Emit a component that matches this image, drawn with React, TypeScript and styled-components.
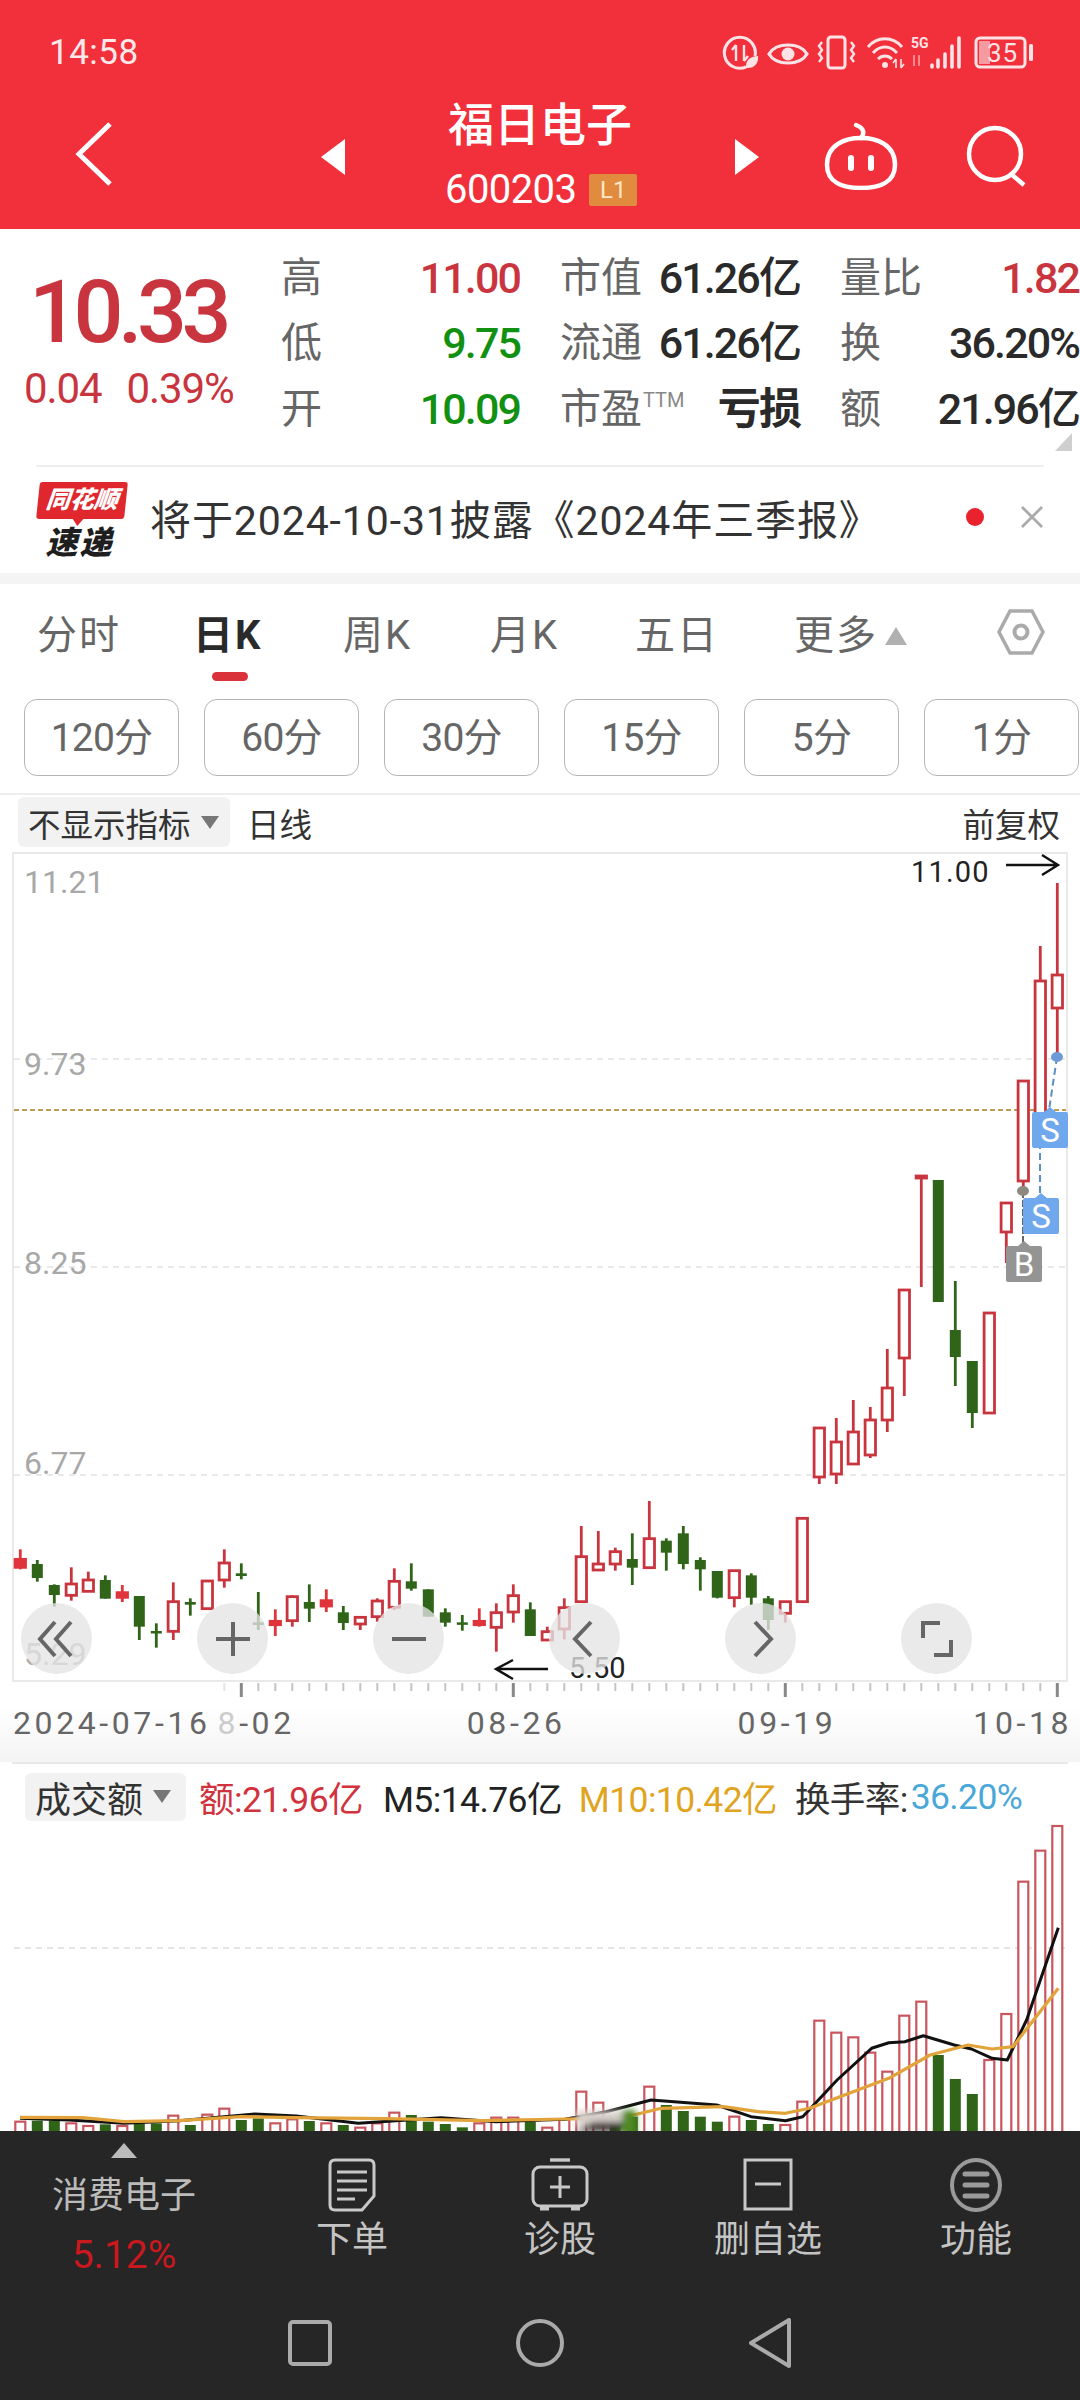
import React from 'react';
import styled, { createGlobalStyle } from 'styled-components';

const FONT = 'Roboto, "Noto Sans CJK SC", sans-serif';
const RED = '#c9353f';
const GREEN = '#2f6419';

const GlobalStyle = createGlobalStyle`
  html, body {
    margin: 0;
    padding: 0;
    background: #fff;
    font-family: ${FONT};
  }
  * { box-sizing: border-box; }
`;

const Page = styled.div`
  position: relative;
  width: 1080px;
  height: 2400px;
  overflow: hidden;
  background: #fff;
`;

/* ---------- red header ---------- */
const Header = styled.header`
  height: 229px;
  background: #f2303c;
  color: #fff;
`;
const StatusBar = styled.div`
  height: 88px;
  padding: 16px 44px 0 49px;
  display: flex;
  align-items: center;
  justify-content: space-between;
`;
const Clock = styled.span`
  font-size: 35px;
  color: #fde8ea;
  letter-spacing: 0.5px;
`;
const NavBar = styled.div`
  height: 141px;
  display: flex;
  align-items: flex-start;
`;
const NavIcon = styled.div<{ $ml: number; $top: number }>`
  margin-left: ${(p) => p.$ml}px;
  margin-top: ${(p) => p.$top}px;
  display: flex;
  flex: none;
`;
const NavCenter = styled.div`
  flex: none;
  width: 190px;
  margin-left: 100px;
  padding-top: 11px;
  display: flex;
  flex-direction: column;
  align-items: flex-start;
`;
const StockName = styled.div`
  font-size: 46px;
  line-height: 52px;
  font-weight: 500;
  width: 190px;
  text-align: center;
`;
const StockCode = styled.div`
  margin-top: 20px;
  display: flex;
  align-items: center;
  gap: 13px;
  font-size: 40px;
  line-height: 38px;
  letter-spacing: -0.6px;
`;
const LevelTag = styled.span`
  width: 48px;
  height: 32px;
  background: #e08b3e;
  color: #fde7c8;
  font-size: 24px;
  line-height: 32px;
  text-align: center;
  border-radius: 2px;
  letter-spacing: 0;
`;

/* ---------- quote ---------- */
const Quote = styled.section`
  position: relative;
  height: 236px;
  display: flex;
`;
const PricePane = styled.div`
  width: 281px;
  padding: 36px 0 0 24px;
  color: ${RED};
`;
const BigPrice = styled.div`
  font-size: 88px;
  line-height: 94px;
  font-weight: 500;
  letter-spacing: -5.5px;
  margin-left: 5px;
`;
const PriceDelta = styled.div`
  margin-top: 8px;
  display: flex;
  gap: 25px;
  font-size: 42px;
  line-height: 44px;
  letter-spacing: -1.1px;
`;
const StatsGrid = styled.div`
  padding-top: 16px;
  display: grid;
  grid-template-columns: 239px 240px 239px;
  column-gap: 40px;
  grid-auto-rows: 65.5px;
  align-items: center;
`;
const StatCell = styled.div`
  display: flex;
  align-items: center;
  justify-content: space-between;
`;
const StatLabel = styled.span`
  font-size: 41px;
  line-height: 48px;
  color: #666;
  display: inline-flex;
  align-items: flex-start;
`;
const Ttm = styled.sup`
  font-size: 20px;
  line-height: 30px;
  color: #888;
  margin-left: 1px;
  vertical-align: baseline;
`;
const StatValue = styled.span<{ $tone?: 'up' | 'down'; $bold?: boolean }>`
  font-size: 43px;
  line-height: 48px;
  font-weight: ${(p) => (p.$bold ? 700 : 500)};
  letter-spacing: -1.9px;
  color: ${(p) => (p.$tone === 'up' ? RED : p.$tone === 'down' ? '#119011' : '#2a2a2a')};
`;
const CornerMark = styled.i`
  position: absolute;
  right: 8px;
  bottom: 14px;
  width: 0;
  height: 0;
  border-left: 17px solid transparent;
  border-bottom: 18px solid #cfcfcf;
`;

/* ---------- notice ---------- */
const Notice = styled.section`
  margin: 0 36px;
  height: 108px;
  border-top: 2px solid #eee;
  display: flex;
  align-items: center;
  padding-bottom: 6px;
`;
const Badge = styled.div`
  position: relative;
  width: 88px;
  margin-left: 2px;
  margin-top: 8px;
  text-align: center;
`;
const BadgeTop = styled.div`
  position: relative;
  height: 37px;
  background: #e0272e;
  color: #fff;
  font-size: 24px;
  line-height: 37px;
  font-weight: 900;
  font-style: italic;
  white-space: nowrap;
  transform: skewX(-6deg);
  border-radius: 3px;
  &::after {
    content: '';
    position: absolute;
    left: 36px;
    bottom: -7px;
    border-left: 6px solid transparent;
    border-right: 6px solid transparent;
    border-top: 8px solid #e0272e;
  }
`;
const BadgeBottom = styled.div`
  margin-top: 7px;
  font-size: 32px;
  line-height: 34px;
  font-weight: 900;
  font-style: italic;
  color: #1e1e1e;
  letter-spacing: 2px;
  margin-left: -5px;
`;
const NoticeText = styled.div`
  margin-left: 24px;
  font-size: 41px;
  color: #333;
  letter-spacing: 0.9px;
  white-space: nowrap;
  flex: 1;
`;
const NoticeDot = styled.i`
  width: 18px;
  height: 18px;
  border-radius: 50%;
  background: #e8232d;
  margin-right: 36px;
`;

const Band = styled.div`
  height: 11px;
  background: #f4f4f4;
`;

/* ---------- tabs ---------- */
const Tabs = styled.nav`
  height: 115px;
`;
const TabRow = styled.div`
  display: flex;
  align-items: center;
  height: 88px;
  padding: 16px 0 0 37px;
`;
const Tab = styled.div<{ $w: number; $active?: boolean }>`
  width: ${(p) => p.$w}px;
  flex: none;
  font-size: 40px;
  line-height: 72px;
  letter-spacing: 2px;
  color: ${(p) => (p.$active ? '#2a2a2a' : '#666')};
  font-weight: ${(p) => (p.$active ? 700 : 400)};
  display: flex;
  align-items: center;
  white-space: nowrap;
`;
const MoreCaret = styled.i`
  margin-left: 7px;
  width: 0;
  height: 0;
  border-left: 11px solid transparent;
  border-right: 11px solid transparent;
  border-bottom: 18px solid #b0b0b0;
`;
const HexIcon = styled.svg`
  margin-top: -8px;
`;
const TabMark = styled.i`
  display: block;
  margin-left: 212px;
  width: 36px;
  height: 9px;
  border-radius: 5px;
  background: #d9323a;
`;
const Periods = styled.div`
  display: flex;
  gap: 25px;
  padding-left: 24px;
  height: 96px;
  border-bottom: 2px solid #eee;
`;
const Period = styled.div`
  width: 155px;
  height: 77px;
  flex: none;
  border: 1px solid #b5b5b5;
  border-radius: 13px;
  font-size: 39px;
  line-height: 77px;
  text-align: center;
  color: #666;
  letter-spacing: -0.8px;
`;

/* ---------- chart toolbar ---------- */
const ChartBar = styled.div`
  height: 57px;
  padding: 0 20px 3px 18px;
  display: flex;
  align-items: center;
`;
const Selector = styled.div<{ $w: number; $h: number }>`
  width: ${(p) => p.$w}px;
  height: ${(p) => p.$h}px;
  background: #f2f2f2;
  border-radius: 6px;
  padding-left: 10px;
  display: flex;
  align-items: center;
  color: #333;
  flex: none;
`;
const SelectorText = styled.span<{ $size: number }>`
  font-size: ${(p) => p.$size}px;
  white-space: nowrap;
`;
const SelectorCaret = styled.i`
  margin-left: 10px;
  border-left: 9px solid transparent;
  border-right: 9px solid transparent;
  border-top: 13px solid #777;
`;
const BarLabel = styled.span<{ $push?: boolean }>`
  font-size: 32.5px;
  color: #333;
  margin-left: ${(p) => (p.$push ? 'auto' : '17px')};
`;

/* ---------- main chart ---------- */
const ChartArea = styled.div`
  position: relative;
  height: 829px;
`;
const ChartSvg = styled.svg`
  display: block;
  overflow: visible;
`;
const FloatRow = styled.div`
  position: absolute;
  left: 21px;
  top: 751px;
  display: flex;
  gap: 105px;
`;
const FloatButton = styled.div`
  width: 71px;
  height: 71px;
  border-radius: 50%;
  background: rgba(228, 228, 228, 0.78);
  display: flex;
  align-items: center;
  justify-content: center;
`;

const AxisStrip = styled.div`
  height: 81px;
  background: linear-gradient(#fff 30%, #f4f4f4 100%);
`;
const TickSvg = styled.svg`
  display: block;
`;
const DateRow = styled.div`
  display: flex;
  padding-left: 13px;
  margin-top: 5px;
`;
const DateLabel = styled.span<{ $ml?: number }>`
  margin-left: ${(p) => p.$ml ?? 0}px;
  font-size: 32px;
  line-height: 38px;
  letter-spacing: 3.6px;
  color: #666;
  white-space: nowrap;
  b {
    font-weight: 400;
    color: #ccc;
  }
`;

/* ---------- volume ---------- */
const VolumePanel = styled.section`
  height: 369px;
  position: relative;
  border-top: 2px solid #e8e8e8;
  margin: 0 12px;
`;
const VolumeHead = styled.div`
  position: absolute;
  left: 13px;
  top: 7px;
  z-index: 1;
  display: flex;
  align-items: center;
`;
const Legend = styled.span<{ $color: string; $ml: number }>`
  margin-left: ${(p) => p.$ml}px;
  font-size: 35.5px;
  letter-spacing: -0.6px;
  color: ${(p) => p.$color};
  white-space: nowrap;
`;
const VolumeSvg = styled.svg`
  position: absolute;
  left: -12px;
  top: -2px;
`;

/* ---------- dock ---------- */
const Dock = styled.footer`
  height: 269px;
  background: #262626;
`;
const DockTop = styled.div`
  height: 152px;
  display: flex;
`;
const Sector = styled.div`
  width: 248px;
  padding-top: 12px;
  display: flex;
  flex-direction: column;
  align-items: center;
  flex: none;
`;
const SectorCaret = styled.i`
  border-left: 13px solid transparent;
  border-right: 13px solid transparent;
  border-bottom: 15px solid #bbb;
`;
const SectorName = styled.div`
  margin-top: 16px;
  font-size: 36px;
  line-height: 44px;
  color: #bbb;
`;
const SectorRate = styled.div`
  margin-top: 17px;
  font-size: 39px;
  line-height: 40px;
  color: #c9181e;
`;
const DockItem = styled.div`
  width: 208px;
  flex: none;
  padding-top: 27px;
  display: flex;
  flex-direction: column;
  align-items: center;
`;
const DockLabel = styled.div`
  margin-top: 5px;
  font-size: 36px;
  line-height: 46px;
  color: #c4c4c4;
`;
const SysNav = styled.div`
  height: 117px;
  display: flex;
  justify-content: center;
  align-items: flex-start;
  padding-top: 35px;
`;
const SysSlot = styled.div`
  width: 230px;
  height: 50px;
  display: flex;
  justify-content: center;
  align-items: center;
`;

/* ---------- data ---------- */
type Kind = 'r' | 'g' | 'f';
// high, low, body top, body bottom
type Candle = [number, number, number, number, Kind];

const candleX = (i: number) => 20.3 + 17 * i;
const lowY = (v: number) => 1450 + v / 3;

const earlyCandles: Candle[] = [
  [298, 358, 328, 352, 'f'], [330, 395, 342, 384, 'g'], [403, 470, 405, 435, 'g'],
  [352, 452, 402, 436, 'r'], [365, 425, 390, 424, 'r'], [376, 446, 390, 446, 'g'],
  [405, 456, 428, 442, 'f'], [438, 570, 438, 530, 'g'], [520, 593, 543, 549, 'g'],
  [397, 570, 455, 544, 'r'], [445, 497, 456, 464, 'g'], [392, 478, 393, 476, 'r'],
  [298, 413, 339, 390, 'r'], [340, 388, 370, 378, 'g'], [426, 540, 517, 525, 'g'],
  [478, 558, 514, 524, 'f'], [436, 530, 440, 512, 'r'], [403, 516, 456, 476, 'g'],
  [418, 486, 452, 468, 'f'], [468, 540, 487, 519, 'g'], [498, 540, 502, 522, 'r'],
  [445, 515, 453, 500, 'r'], [355, 480, 394, 472, 'r'], [340, 422, 394, 416, 'g'],
  [418, 500, 418, 500, 'g'], [475, 530, 487, 518, 'g'], [495, 542, 517, 524, 'g'],
  [475, 530, 514, 524, 'f'], [460, 605, 488, 532, 'r'], [403, 518, 437, 486, 'r'],
  [457, 558, 478, 558, 'g'], [530, 572, 545, 570, 'r'], [445, 568, 473, 537, 'r'],
  [228, 455, 320, 455, 'r'], [243, 360, 342, 360, 'r'], [293, 362, 305, 342, 'r'],
  [250, 405, 327, 353, 'g'], [153, 355, 266, 353, 'r'], [265, 362, 272, 308, 'g'],
  [228, 358, 250, 342, 'g'], [322, 422, 330, 358, 'g'], [363, 445, 363, 443, 'g'],
  [362, 472, 362, 443, 'r'], [370, 465, 376, 443, 'g'], [438, 540, 445, 510, 'g'],
  [455, 518, 455, 490, 'r'], [205, 455, 205, 455, 'r'],
];

const lateCandles: Candle[] = [
  [1428, 1484, 1428, 1477, 'r'], [1418, 1484, 1442, 1474, 'r'], [1400, 1465, 1432, 1464, 'r'],
  [1407, 1458, 1420, 1455, 'r'], [1349, 1432, 1388, 1420, 'r'], [1290, 1396, 1290, 1358, 'r'],
  [1176, 1287, 1176, 1178, 'r'], [1180, 1302, 1180, 1302, 'g'], [1281, 1386, 1330, 1357, 'g'],
  [1361, 1428, 1361, 1413, 'g'], [1313, 1413, 1313, 1413, 'r'], [1203, 1263, 1203, 1232, 'r'],
  [1081, 1191, 1081, 1181, 'r'], [946, 1142, 981, 1122, 'r'], [883, 1058, 975, 1008, 'r'],
];

const candles: Candle[] = [
  ...earlyCandles.map(
    ([h, l, t, b, k]): Candle => [lowY(h), lowY(l), lowY(t), lowY(b), k],
  ),
  ...lateCandles,
];

const volumes: [number, 'r' | 'g'][] = [
  [1115, 'r'], [1112, 'g'], [1112, 'g'], [1120, 'r'], [1128, 'r'], [1123, 'g'], [1128, 'r'], [1120, 'g'],
  [1120, 'g'], [1097, 'r'], [1125, 'g'], [1094, 'r'], [1076, 'r'], [1110, 'g'], [1105, 'g'], [1120, 'r'],
  [1108, 'r'], [1113, 'g'], [1120, 'r'], [1125, 'g'], [1133, 'r'], [1120, 'r'], [1088, 'r'], [1095, 'g'],
  [1115, 'g'], [1122, 'g'], [1132, 'g'], [1120, 'r'], [1103, 'r'], [1103, 'r'], [1115, 'g'], [1133, 'r'],
  [1108, 'r'], [1025, 'r'], [1058, 'r'], [1100, 'g'], [1100, 'g'], [1010, 'r'], [1065, 'g'], [1083, 'g'],
  [1100, 'g'], [1115, 'g'], [1100, 'r'], [1110, 'g'], [1122, 'g'], [1125, 'r'], [1055, 'r'], [812, 'r'],
  [848, 'r'], [862, 'r'], [908, 'r'], [965, 'r'], [797, 'r'], [755, 'r'], [915, 'g'], [987, 'g'],
  [1032, 'g'], [930, 'r'], [792, 'r'], [395, 'r'], [302, 'r'], [228, 'r'],
];

const ma5: [number, number][] = [
  [29, 1105], [100, 1110], [180, 1120], [260, 1112], [370, 1092], [430, 1098], [520, 1120], [640, 1103],
  [720, 1115], [820, 1108], [880, 1085], [945, 1050], [1040, 1065], [1090, 1100], [1140, 1112], [1165, 1100],
  [1215, 990], [1265, 895], [1290, 878], [1313, 875], [1340, 857], [1385, 885], [1410, 897], [1440, 925],
  [1462, 930], [1490, 810], [1536, 533],
];
const ma10: [number, number][] = [
  [29, 1102], [120, 1103], [180, 1115], [260, 1112], [350, 1100], [430, 1103], [560, 1106], [700, 1112],
  [820, 1107], [900, 1105], [960, 1075], [1050, 1070], [1100, 1085], [1140, 1090], [1175, 1075], [1290, 985],
  [1350, 915], [1405, 885], [1440, 897], [1470, 890], [1536, 715],
];

const CHART_TOP = 852;
const VOL_TOP = 1762;

const linePoints = (pts: [number, number][]) =>
  pts.map(([x, y]) => `${(x * 0.689).toFixed(1)},${(1750 + y / 3 - VOL_TOP).toFixed(1)}`).join(' ');

/* ---------- drawings ---------- */
const CandleMark: React.FC<{ c: Candle; i: number }> = ({ c, i }) => {
  const [h, l, t, b, k] = c;
  const x = candleX(i);
  const col = k === 'g' ? GREEN : k === 'f' ? '#e0343c' : RED;
  const top = t - CHART_TOP;
  const bottom = b - CHART_TOP;
  return (
    <g>
      <line x1={x} x2={x} y1={h - CHART_TOP} y2={l - CHART_TOP} stroke={col} strokeWidth={2.8} />
      {k === 'g' ? (
        <rect x={x - 5.5} y={top} width={11} height={Math.max(bottom - top, 2.5)} fill={col} />
      ) : (
        <rect
          x={x - 5.2}
          y={top}
          width={10.4}
          height={Math.max(bottom - top, 1.5)}
          fill={k === 'f' ? col : '#fff'}
          stroke={col}
          strokeWidth={2.8}
        />
      )}
    </g>
  );
};

const AxisText: React.FC<{ y: number; children: string }> = ({ y, children }) => (
  <text x={24} y={y - CHART_TOP + 12} fontSize={32} fill="#a8a8a8" fontFamily={FONT}>
    {children}
  </text>
);

const Pin: React.FC<{ x: number; y: number; w: number; fill: string; label: string }> = ({ x, y, w, fill, label }) => (
  <g>
    <path
      d={`M${x + 2} ${y} H${x + w / 2 - 6} L${x + w / 2} ${y - 5} L${x + w / 2 + 6} ${y} H${x + w - 2} Q${x + w} ${y} ${x + w} ${y + 2} V${y + 34} Q${x + w} ${y + 36} ${x + w - 2} ${y + 36} H${x + 2} Q${x} ${y + 36} ${x} ${y + 34} V${y + 2} Q${x} ${y} ${x + 2} ${y} Z`}
      fill={fill}
    />
    <text x={x + w / 2} y={y + 30} fontSize={33} fill="#fff" textAnchor="middle" fontFamily={FONT}>
      {label}
    </text>
  </g>
);

const KLineChart: React.FC = () => {
  const gridYs = [1059, 1267, 1475];
  return (
    <ChartSvg width={1080} height={829} viewBox="0 0 1080 829">
      <rect x={13} y={1} width={1054} height={828} fill="none" stroke="#e9e9e9" strokeWidth={2} />
      {gridYs.map((g) => (
        <line key={g} x1={14} x2={1066} y1={g - CHART_TOP} y2={g - CHART_TOP} stroke="#e2e2e2" strokeWidth={1.5} strokeDasharray="6 5" />
      ))}
      <line x1={14} x2={1066} y1={1110 - CHART_TOP} y2={1110 - CHART_TOP} stroke="#c49a52" strokeWidth={2} strokeDasharray="5 3" />
      <AxisText y={881}>11.21</AxisText>
      <AxisText y={1063}>9.73</AxisText>
      <AxisText y={1262}>8.25</AxisText>
      <AxisText y={1462}>6.77</AxisText>
      <AxisText y={1653}>5.29</AxisText>

      {candles.map((c, i) => (
        <CandleMark key={i} c={c} i={i} />
      ))}

      {/* trade markers */}
      <line x1={1023} x2={1023} y1={1191 - CHART_TOP} y2={1246 - CHART_TOP} stroke="#666" strokeWidth={2} strokeDasharray="7 2" />
      <line x1={1040} x2={1040} y1={1142 - CHART_TOP} y2={1196 - CHART_TOP} stroke="#5a8fc4" strokeWidth={2} strokeDasharray="7 4" />
      <line x1={1057} x2={1049} y1={1057 - CHART_TOP} y2={1110 - CHART_TOP} stroke="#5a8fc4" strokeWidth={2} strokeDasharray="7 4" />
      <ellipse cx={1023} cy={1191 - CHART_TOP} rx={6} ry={5} fill="#8a8a80" />
      <ellipse cx={1040} cy={1142 - CHART_TOP} rx={6} ry={5} fill="#5f95db" />
      <ellipse cx={1057} cy={1057 - CHART_TOP} rx={6} ry={5} fill="#6d9bd8" />
      <Pin x={1023} y={1198 - CHART_TOP} w={36} fill="#70a8ee" label="S" />
      <Pin x={1032} y={1112 - CHART_TOP} w={36} fill="#70a8ee" label="S" />
      <Pin x={1006} y={1246 - CHART_TOP} w={36} fill="#949494" label="B" />

      <text x={911} y={882 - CHART_TOP} fontSize={29} fill="#222" fontFamily={FONT} letterSpacing={1.2}>11.00</text>
      <path d={`M1006 ${865 - CHART_TOP} H1058 M1042 ${855 - CHART_TOP} L1058 ${865 - CHART_TOP} L1042 ${875 - CHART_TOP}`} fill="none" stroke="#111" strokeWidth={2.4} />
      <text x={569} y={1678 - CHART_TOP} fontSize={29} fill="#222" fontFamily={FONT}>5.50</text>
      <path d={`M548 ${1669 - CHART_TOP} H496 M513 ${1660 - CHART_TOP} L496 ${1669 - CHART_TOP} L513 ${1679 - CHART_TOP}`} fill="none" stroke="#111" strokeWidth={2.4} />
    </ChartSvg>
  );
};

const RoundIcon: React.FC<{ d: string; w?: number }> = ({ d, w = 4 }) => (
  <svg width={40} height={40} viewBox="0 0 40 40" fill="none" stroke="#666" strokeWidth={w}>
    <path d={d} />
  </svg>
);

const AxisTicks: React.FC = () => {
  const ticks = [];
  for (let i = 12; i <= 61; i++) {
    const big = i === 13 || i === 29 || i === 45 || i === 61;
    ticks.push(
      <line
        key={i}
        x1={candleX(i)}
        x2={candleX(i)}
        y1={2}
        y2={big ? 16 : 10}
        stroke={big ? '#888' : i === 12 ? '#e4e4e4' : '#c4c4c4'}
        strokeWidth={big ? 3 : 2}
      />,
    );
  }
  return (
    <TickSvg width={1080} height={18} viewBox="0 0 1080 18">
      {ticks}
    </TickSvg>
  );
};

const VolumeChart: React.FC = () => (
  <VolumeSvg width={1080} height={369} viewBox="0 0 1080 369">
    <defs>
      <filter id="smudge" x="-30%" y="-30%" width="160%" height="160%">
        <feGaussianBlur stdDeviation="3" />
      </filter>
    </defs>
    <line x1={14} x2={1066} y1={1948 - VOL_TOP} y2={1948 - VOL_TOP} stroke="#ddd" strokeWidth={1.5} strokeDasharray="6 5" />
    {volumes.map(([z, k], i) => {
      const top = 1750 + z / 3 - VOL_TOP;
      const x = candleX(i);
      return k === 'g' ? (
        <rect key={i} x={x - 5.5} y={top} width={11} height={369 - top} fill={GREEN} />
      ) : (
        <rect key={i} x={x - 5} y={top} width={10} height={369 - top + 4} fill="#fff" stroke="#c9565e" strokeWidth={2.2} />
      );
    })}
    <polyline points={linePoints(ma5)} fill="none" stroke="#111" strokeWidth={3} strokeLinejoin="round" />
    <polyline points={linePoints(ma10)} fill="none" stroke="#e2a33a" strokeWidth={3.2} strokeLinejoin="round" />
    <g filter="url(#smudge)">
      <rect x={576} y={2111 - VOL_TOP} width={50} height={14} fill="#d8d2cc" />
      <path d={`M574 369 L594 ${2122 - VOL_TOP} H622 V369 Z`} fill="#2e2a26" />
      <rect x={622} y={2110 - VOL_TOP} width={14} height={26} fill="#4f8a22" />
    </g>
  </VolumeSvg>
);

const StatusIcons: React.FC = () => (
  <svg width={314} height={40} viewBox="0 0 314 40" fill="none" stroke="#fde3e5" strokeWidth={2.6}>
    {/* data saver */}
    <path d="M24 35 A15.5 15.5 0 1 1 33 24" strokeWidth={3} />
    <path d="M14 13 V29 M14 13 L10 18 M22 13 V29 M22 29 L26 24" strokeWidth={2.4} />
    <path d="M24 36 C23 28 29 24 36 24 C37 31 32 37 24 36 Z" fill="#fde3e5" stroke="none" />
    {/* eye */}
    <path d="M47 22 C54 10 78 10 85 22 C78 34 54 34 47 22 Z" strokeWidth={3.2} />
    <circle cx={66} cy={22} r={6.5} fill="#fde3e5" stroke="none" />
    {/* vibrate */}
    <rect x={106} y={5} width={17} height={31} rx={3} strokeWidth={3} />
    <path d="M100 10 l-3 4 l3 4 l-3 4 l3 4 l-3 4 M129 10 l3 4 l-3 4 l3 4 l-3 4 l3 4" strokeWidth={2.4} />
    {/* wifi */}
    <path d="M146 15 C155 4 171 4 180 15 M151 21 C158 13 168 13 175 21 M156 27 C160 23 166 23 170 27" strokeWidth={3} />
    <circle cx={163} cy={33} r={3} fill="#fde3e5" stroke="none" />
    <path d="M174 27 V36 M174 27 L171 31 M179 27 V36 M179 36 L182 32" strokeWidth={1.6} />
    {/* signal */}
    <text x={189} y={16} fontSize={14} fontWeight={700} fill="#fde3e5" stroke="none" fontFamily={FONT}>5G</text>
    <path d="M192 23 V34 M197 23 V34" stroke="#f7898f" strokeWidth={2} />
    <g stroke="#fde3e5" strokeWidth={3.6} strokeLinecap="round">
      <path d="M210 33 V35 M216 28 V35 M223 22 V35 M230 14 V35 M237 6 V35" />
    </g>
    {/* battery */}
    <rect x={254} y={6} width={49} height={29} rx={4} strokeWidth={3} />
    <rect x={257} y={9} width={11} height={23} fill="#f59aa0" stroke="none" />
    <text x={265} y={30} fontSize={26} fill="#fde3e5" stroke="none" fontFamily={FONT} letterSpacing={1}>35</text>
    <rect x={307} y={12} width={4} height={17} rx={1.5} fill="#fde3e5" stroke="none" />
  </svg>
);

const stats = [
  { l: '高', v: '11.00', t: 'up' as const },
  { l: '市值', v: '61.26亿' },
  { l: '量比', v: '1.82', t: 'up' as const },
  { l: '低', v: '9.75', t: 'down' as const },
  { l: '流通', v: '61.26亿' },
  { l: '换', v: '36.20%' },
  { l: '开', v: '10.09', t: 'down' as const },
  { l: '市盈', v: '亏损', ttm: true },
  { l: '额', v: '21.96亿' },
];

const tabs: { label: string; w: number; active?: boolean }[] = [
  { label: '分时', w: 156 },
  { label: '日K', w: 150, active: true },
  { label: '周K', w: 147 },
  { label: '月K', w: 145 },
  { label: '五日', w: 159 },
];

const App: React.FC = () => (
  <Page>
    <GlobalStyle />
    <Header>
      <StatusBar>
        <Clock>14:58</Clock>
        <StatusIcons />
      </StatusBar>
      <NavBar>
        <NavIcon $ml={74} $top={33}>
          <svg width={40} height={66} viewBox="0 0 40 66" fill="none" stroke="#fff" strokeWidth={5}>
            <path d="M36 3 L5 33 L36 63" />
          </svg>
        </NavIcon>
        <NavIcon $ml={207} $top={51}>
          <svg width={24} height={36} viewBox="0 0 24 36" fill="#fff">
            <path d="M24 0 V36 L0 18 Z" />
          </svg>
        </NavIcon>
        <NavCenter>
          <StockName>福日电子</StockName>
          <StockCode>
            600203
            <LevelTag>L1</LevelTag>
          </StockCode>
        </NavCenter>
        <NavIcon $ml={100} $top={51}>
          <svg width={24} height={36} viewBox="0 0 24 36" fill="#fff">
            <path d="M0 0 V36 L24 18 Z" />
          </svg>
        </NavIcon>
        <NavIcon $ml={65} $top={34}>
          <svg width={74} height={68} viewBox="0 0 74 68" fill="none" stroke="#fff" strokeWidth={4.5}>
            <path d="M37 16 C22 16 3 22 3 43 C3 60 18 66 37 66 C56 66 71 60 71 43 C71 22 52 16 37 16 Z" />
            <path d="M37 16 C41 11 40 6 32 3" strokeLinecap="round" />
            <path d="M27 36 V46 M47 36 V46" strokeWidth={6} strokeLinecap="round" />
          </svg>
        </NavIcon>
        <NavIcon $ml={68} $top={37}>
          <svg width={62} height={62} viewBox="0 0 62 62" fill="none" stroke="#fff" strokeWidth={4.5}>
            <circle cx={29} cy={29} r={26} />
            <path d="M45 49 L58 60" />
          </svg>
        </NavIcon>
      </NavBar>
    </Header>

    <Quote>
      <PricePane>
        <BigPrice>10.33</BigPrice>
        <PriceDelta>
          <span>0.04</span>
          <span>0.39%</span>
        </PriceDelta>
      </PricePane>
      <StatsGrid>
        {stats.map((s) => (
          <StatCell key={s.l}>
            <StatLabel>
              {s.l}
              {s.ttm && <Ttm>TTM</Ttm>}
            </StatLabel>
            <StatValue $tone={s.t} $bold={s.ttm}>
              {s.v}
            </StatValue>
          </StatCell>
        ))}
      </StatsGrid>
      <CornerMark />
    </Quote>

    <Notice>
      <Badge>
        <BadgeTop>同花顺</BadgeTop>
        <BadgeBottom>速递</BadgeBottom>
      </Badge>
      <NoticeText>将于2024-10-31披露《2024年三季报》</NoticeText>
      <NoticeDot />
      <svg width={24} height={24} viewBox="0 0 24 24" stroke="#aaa" strokeWidth={2.8} fill="none">
        <path d="M2 2 L22 22 M22 2 L2 22" />
      </svg>
    </Notice>
    <Band />

    <Tabs>
      <TabRow>
        {tabs.map((t) => (
          <Tab key={t.label} $w={t.w} $active={t.active}>
            {t.label}
          </Tab>
        ))}
        <Tab $w={202}>
          更多
          <MoreCaret />
        </Tab>
        <HexIcon width={50} height={48} viewBox="0 0 50 48" fill="none" stroke="#aaa" strokeWidth={3.5}>
          <path d="M14 3 H36 L47 24 L36 45 H14 L3 24 Z" />
          <circle cx={25} cy={24} r={6.5} strokeWidth={4} />
        </HexIcon>
      </TabRow>
      <TabMark />
    </Tabs>

    <Periods>
      {['120分', '60分', '30分', '15分', '5分', '1分'].map((p) => (
        <Period key={p}>{p}</Period>
      ))}
    </Periods>

    <ChartBar>
      <Selector $w={212} $h={50}>
        <SelectorText $size={32.5}>不显示指标</SelectorText>
        <SelectorCaret />
      </Selector>
      <BarLabel>日线</BarLabel>
      <BarLabel $push>前复权</BarLabel>
    </ChartBar>

    <ChartArea>
      <KLineChart />
      <FloatRow>
        <FloatButton>
          <RoundIcon d="M18 3 L3 20 L18 37 M34 3 L19 20 L34 37" />
        </FloatButton>
        <FloatButton>
          <RoundIcon d="M20 3 V37 M3 20 H37" />
        </FloatButton>
        <FloatButton>
          <RoundIcon d="M3 20 H37" />
        </FloatButton>
        <FloatButton>
          <RoundIcon d="M26 3 L10 20 L26 37" />
        </FloatButton>
        <FloatButton>
          <RoundIcon d="M14 3 L30 20 L14 37" />
        </FloatButton>
        <FloatButton>
          <RoundIcon d="M6 19 V4 H23 M34 21 V36 H17" />
        </FloatButton>
      </FloatRow>
    </ChartArea>

    <AxisStrip>
      <AxisTicks />
      <DateRow>
        <DateLabel>2024-07-16</DateLabel>
        <DateLabel $ml={7}>
          <b>8</b>-02
        </DateLabel>
        <DateLabel $ml={172}>08-26</DateLabel>
        <DateLabel $ml={172}>09-19</DateLabel>
        <DateLabel $ml={137}>10-18</DateLabel>
      </DateRow>
    </AxisStrip>

    <VolumePanel>
      <VolumeChart />
      <VolumeHead>
        <Selector $w={161} $h={48}>
          <SelectorText $size={36}>成交额</SelectorText>
          <SelectorCaret />
        </Selector>
        <Legend $color="#d0333d" $ml={13}>额:21.96亿</Legend>
        <Legend $color="#222" $ml={20}>M5:14.76亿</Legend>
        <Legend $color="#e0a41f" $ml={17}>M10:10.42亿</Legend>
        <Legend $color="#333" $ml={18}>换手率:</Legend>
        <Legend $color="#4aa8d8" $ml={3}>36.20%</Legend>
      </VolumeHead>
    </VolumePanel>

    <Dock>
      <DockTop>
        <Sector>
          <SectorCaret />
          <SectorName>消费电子</SectorName>
          <SectorRate>5.12%</SectorRate>
        </Sector>
        <DockItem>
          <svg width={48} height={54} viewBox="0 0 48 54" fill="none" stroke="#c8c8c8" strokeWidth={3}>
            <path d="M7 2 H41 Q46 2 46 7 V38 L34 52 H7 Q2 52 2 47 V7 Q2 2 7 2 Z" />
            <path d="M9 14 H39 M9 23 H39 M9 32 H39 M9 41 H27" />
          </svg>
          <DockLabel>下单</DockLabel>
        </DockItem>
        <DockItem>
          <svg width={58} height={54} viewBox="0 0 58 54" fill="none" stroke="#c8c8c8" strokeWidth={3}>
            <path d="M19 2 H39" strokeWidth={3.4} />
            <rect x={2} y={9} width={54} height={39} rx={7} />
            <path d="M29 18 V40 M19 29 H39" />
            <path d="M9 50 H18 M40 50 H49" strokeWidth={5} />
          </svg>
          <DockLabel>诊股</DockLabel>
        </DockItem>
        <DockItem>
          <svg width={50} height={54} viewBox="0 0 50 54" fill="none" stroke="#c8c8c8" strokeWidth={3}>
            <rect x={2} y={2} width={46} height={49} />
            <path d="M12 26 H38" />
          </svg>
          <DockLabel>删自选</DockLabel>
        </DockItem>
        <DockItem>
          <svg width={52} height={54} viewBox="0 0 52 54" fill="none">
            <ellipse cx={26} cy={27} rx={24} ry={25} stroke="#9a9a9a" strokeWidth={4} />
            <path d="M15 16 H37 M15 27 H37 M15 38 H37" stroke="#9a9a9a" strokeWidth={5} strokeLinecap="round" />
          </svg>
          <DockLabel>功能</DockLabel>
        </DockItem>
      </DockTop>
      <SysNav>
        <SysSlot>
          <svg width={44} height={46} viewBox="0 0 44 46" fill="none" stroke="#aaa" strokeWidth={4}>
            <rect x={2} y={2} width={40} height={42} rx={3} />
          </svg>
        </SysSlot>
        <SysSlot>
          <svg width={48} height={48} viewBox="0 0 48 48" fill="none" stroke="#aaa" strokeWidth={4}>
            <circle cx={24} cy={24} r={22} />
          </svg>
        </SysSlot>
        <SysSlot>
          <svg width={44} height={50} viewBox="0 0 44 50" fill="none" stroke="#aaa" strokeWidth={4} strokeLinejoin="round">
            <path d="M41 2 V48 L3 25 Z" />
          </svg>
        </SysSlot>
      </SysNav>
    </Dock>
  </Page>
);

export default App;
